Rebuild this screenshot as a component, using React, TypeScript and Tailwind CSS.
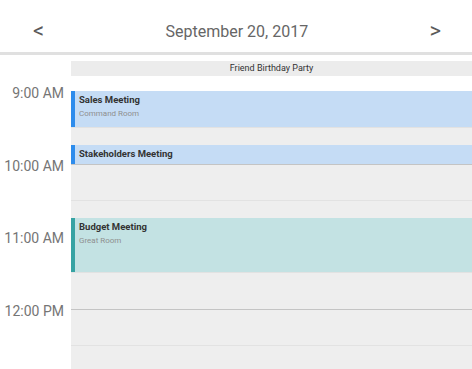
import React from "react";

const HOUR = 72.5;

type Ev = { title: string; sub?: string; start: number; end: number; color: "blue" | "teal" };

const events: Ev[] = [
  { title: "Sales Meeting", sub: "Command Room", start: 0, end: 0.5, color: "blue" },
  { title: "Stakeholders Meeting", start: 0.75, end: 1, color: "blue" },
  { title: "Budget Meeting", sub: "Great Room", start: 1.75, end: 2.5, color: "teal" },
];

const labels = ["9:00 AM", "10:00 AM", "11:00 AM", "12:00 PM"];

export default function App() {
  return (
    <div
      className="w-[472px] h-[369px] overflow-hidden bg-white"
      style={{ fontFamily: "Roboto, 'Noto Sans', sans-serif" }}
    >
      <div className="h-[55px] pt-[12px] flex items-center justify-between pl-[33px] pr-[31px] border-b-[3px] border-[#e0e0e0]">
        <span className="text-[22px] leading-none text-[#5a5a5a] pb-[2px]">&lt;</span>
        <span className="text-[16px] text-[#666]">September 20, 2017</span>
        <span className="text-[22px] leading-none text-[#5a5a5a] pb-[2px]">&gt;</span>
      </div>
      <div className="pl-[71px] pt-[6px]">
        <div className="h-[15px] bg-[#ececec] flex items-center justify-center text-[9px] text-[#333]">
          Friend Birthday Party
        </div>
      </div>
      <div className="flex mt-[15px]">
        <div className="w-[71px] relative">
          {labels.map((l, i) => (
            <div
              key={l}
              className="absolute right-[7px] text-[14px] leading-none text-[#757575] -translate-y-1/2"
              style={{ top: i * HOUR + 2 }}
            >
              {l}
            </div>
          ))}
        </div>
        <div className="flex-1 relative h-[278px] bg-[#eeeeee]">
          {[0, 1, 2, 3].map((i) => (
            <React.Fragment key={i}>
              <div className="absolute left-0 right-0 h-px bg-[#c4c4c4]" style={{ top: i * HOUR }} />
              <div className="absolute left-0 right-0 h-px bg-[#e2e2e2]" style={{ top: i * HOUR + HOUR / 2 }} />
            </React.Fragment>
          ))}
          {events.map((e) => (
            <div
              key={e.title}
              className={
                "absolute left-0 right-0 border-l-4 pl-[4px] pt-[3px] " +
                (e.color === "blue"
                  ? "bg-[#c5dcf5] border-[#2d8cec]"
                  : "bg-[#c3e2e3] border-[#36a3a3]")
              }
              style={{ top: e.start * HOUR, height: (e.end - e.start) * HOUR }}
            >
              <div className="text-[9.5px] font-bold leading-[11px] text-[#333]">{e.title}</div>
              {e.sub && <div className="text-[8px] leading-[10px] mt-[4px] text-[#8f8f8f]">{e.sub}</div>}
            </div>
          ))}
        </div>
      </div>
    </div>
  );
}
